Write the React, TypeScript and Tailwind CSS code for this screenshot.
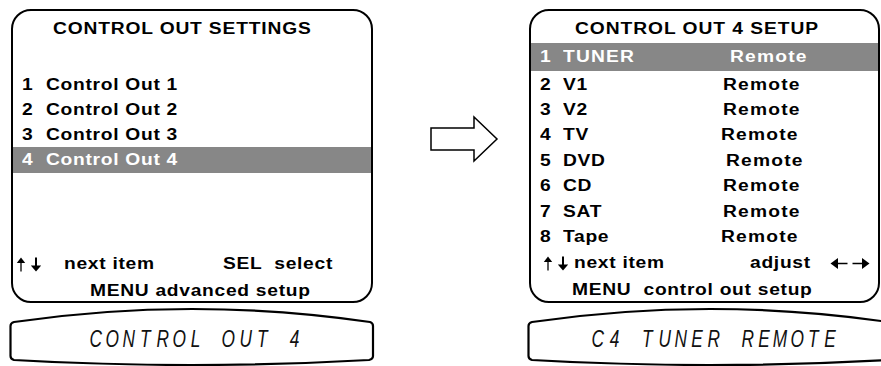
import React from "react";

const font = "font-['Liberation_Sans',Arial,sans-serif] font-bold text-[16px] leading-[20px] tracking-[0.6px] text-black";

function T({ children, className = "" }: { children: React.ReactNode; className?: string }) {
  return <span className={`inline-block origin-left scale-x-[1.2] whitespace-pre ${className}`}>{children}</span>;
}

function UpDown() {
  return (
    <span className="flex items-center gap-[4px]">
      <svg width="10" height="15" viewBox="0 0 10 15">
        <path d="M5 0.5 L0.8 6 L9.2 6 Z" fill="black" />
        <line x1="5" y1="5.5" x2="5" y2="14.5" stroke="black" strokeWidth="1.3" />
      </svg>
      <svg width="12" height="15" viewBox="0 0 12 15">
        <line x1="6" y1="0.5" x2="6" y2="9.5" stroke="black" strokeWidth="2" />
        <path d="M6 14.5 L0.8 8.5 L11.2 8.5 Z" fill="black" />
      </svg>
    </span>
  );
}

function LeftRight() {
  return (
    <span className="flex items-center gap-[4px]">
      <svg width="18" height="13" viewBox="0 0 18 13">
        <path d="M0.5 6.5 L8 1 L8 12 Z" fill="black" />
        <line x1="7" y1="6.5" x2="17.5" y2="6.5" stroke="black" strokeWidth="1.4" />
      </svg>
      <svg width="18" height="13" viewBox="0 0 18 13">
        <line x1="0.5" y1="6.5" x2="11" y2="6.5" stroke="black" strokeWidth="1.4" />
        <path d="M17.5 6.5 L10 1 L10 12 Z" fill="black" />
      </svg>
    </span>
  );
}

function Lcd({ text, pad }: { text: string; pad: string }) {
  return (
    <div className="relative w-[366px] h-[60px] mt-[3px] flex items-center justify-center">
      <svg className="absolute inset-0" width="366" height="60" viewBox="0 0 366 60">
        <path
          d="M5 16 Q183 -10 361 16 Q364 17 364 20 L364 50 Q364 53 360 54 Q183 64 5 54 Q1.5 53 1.5 50 L1.5 20 Q1.5 17 5 16 Z"
          fill="white"
          stroke="black"
          strokeWidth="2.2"
        />
      </svg>
      <span
        className={`relative ${pad} pt-[5px] flex font-['Liberation_Sans',sans-serif] font-normal italic text-[24px] leading-[24px] text-[#111]`}
      >
        {text.split("").map((c, i) => (
          <span key={i} className="w-[16.6px] flex justify-center whitespace-pre">
            <span className="inline-block scale-x-[0.72]">{c}</span>
          </span>
        ))}
      </span>
    </div>
  );
}

const rightRows: { n: string; label: string; w: string }[] = [
  { n: "2", label: "V1", w: "w-[160px]" },
  { n: "3", label: "V2", w: "w-[160px]" },
  { n: "4", label: "TV", w: "w-[158px]" },
  { n: "5", label: "DVD", w: "w-[163px]" },
  { n: "6", label: "CD", w: "w-[160px]" },
  { n: "7", label: "SAT", w: "w-[160px]" },
  { n: "8", label: "Tape", w: "w-[158px]" },
];

export default function App() {
  return (
    <div className="w-[881px] h-[366px] bg-white overflow-hidden flex">
      {/* Left column */}
      <div className="w-[366px] ml-[9px] pt-[9px] shrink-0 flex flex-col">
        <div className={`ml-[2px] w-[362px] h-[294px] border-2 border-black rounded-[20px] flex flex-col overflow-hidden ${font}`}>
          <div className="mt-[8px] h-[20px] pl-[40px]">
            <T className="tracking-[0.7px]">CONTROL OUT SETTINGS</T>
          </div>
          <div className="mt-[33px] flex flex-col">
            {["1", "2", "3"].map((n) => (
              <div key={n} className="h-[25px] flex items-center pl-[9px]">
                <span className="w-[24px]"><T>{n}</T></span>
                <T>Control Out {n}</T>
              </div>
            ))}
            <div className="h-[26px] flex items-center pl-[9px] bg-[#878787] text-white">
              <span className="w-[24px]"><T>4</T></span>
              <T>Control Out 4</T>
            </div>
          </div>
          <div className="mt-auto mb-[7px] h-[20px] flex items-center pl-[3px]">
            <UpDown />
            <span className="ml-[22px] w-[159px]"><T>next item</T></span>
            <T>SEL  select</T>
          </div>
          <div className="h-[20px] pl-[77px]">
            <T>MENU advanced setup</T>
          </div>
        </div>
        <Lcd text="CONTROL OUT 4" pad="pl-[7px]" />
      </div>

      {/* Middle arrow */}
      <div className="w-[152px] shrink-0 pt-[115px] pl-[54px]">
        <svg width="70" height="48" viewBox="0 0 70 48">
          <path
            d="M2 13 L45 13 L45 2 L68 24 L45 46 L45 35 L2 35 Z"
            fill="white"
            stroke="black"
            strokeWidth="1.5"
            strokeLinejoin="miter"
          />
        </svg>
      </div>

      {/* Right column */}
      <div className="w-[366px] pt-[9px] shrink-0 flex flex-col">
        <div className={`ml-[2px] w-[351px] h-[294px] border-2 border-black rounded-[20px] flex flex-col overflow-hidden ${font}`}>
          <div className="mt-[8px] h-[20px] pl-[44px]">
            <T className="tracking-[0.8px]">CONTROL OUT 4 SETUP</T>
          </div>
          <div className="mt-[4px] h-[28px] flex items-center pl-[9px] bg-[#878787] text-white">
            <span className="w-[23px]"><T>1</T></span>
            <span className="w-[167px]"><T className="tracking-[1px]">TUNER</T></span>
            <T className="tracking-[1px]">Remote</T>
          </div>
          <div className="mt-[1px] flex flex-col">
            {rightRows.map((r) => (
              <div key={r.n} className="h-[25.4px] flex items-center pl-[9px]">
                <span className="w-[23px]"><T>{r.n}</T></span>
                <span className={r.w}><T>{r.label}</T></span>
                <T className="tracking-[1px]">Remote</T>
              </div>
            ))}
          </div>
          <div className="mt-auto mb-[7px] h-[20px] flex items-center pl-[12px]">
            <UpDown />
            <span className="ml-[5px] w-[176px]"><T>next item</T></span>
            <span className="w-[80px]"><T>adjust</T></span>
            <LeftRight />
          </div>
          <div className="mb-[1px] h-[20px] pl-[41px]">
            <T>MENU  control out setup</T>
          </div>
        </div>
        <Lcd text="C4 TUNER REMOTE" pad="pl-[8px]" />
      </div>
    </div>
  );
}
